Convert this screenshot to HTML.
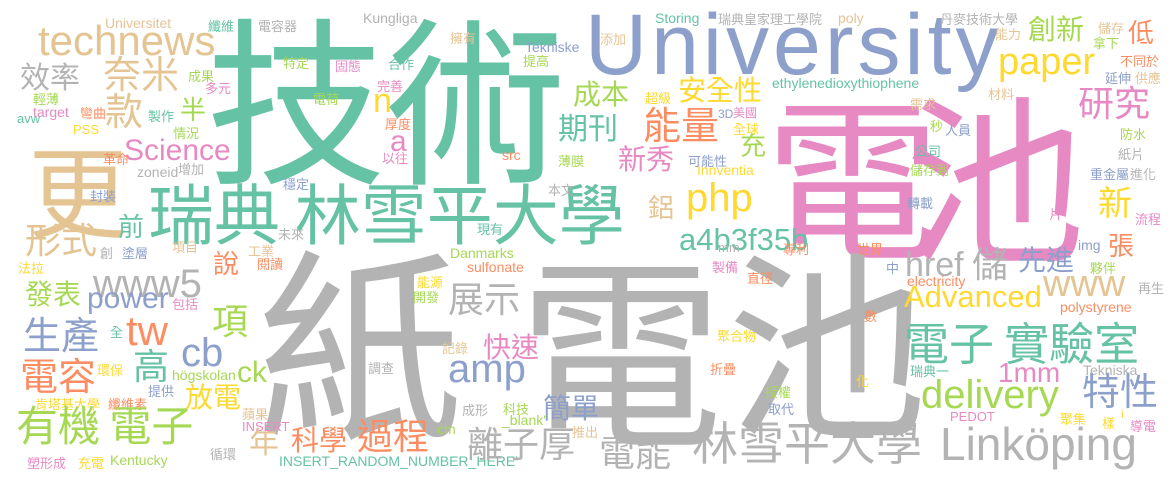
<!DOCTYPE html>
<html><head><meta charset="utf-8"><style>
html,body{margin:0;padding:0;background:#fff;}
#w{position:relative;width:1175px;height:482px;overflow:hidden;background:#fff;}
#w span{position:absolute;line-height:1;white-space:nowrap;font-family:"Liberation Sans",sans-serif;}
#w span.c{font-family:"Noto Sans CJK TC","Noto Sans CJK SC",sans-serif;}
.t{color:#66c2a5}.o{color:#fc8d62}.b{color:#8da0cb}.p{color:#e78ac3}.g{color:#a6d854}.y{color:#ffd92f}.n{color:#e5c494}.k{color:#b3b3b3}
</style></head><body><div id="w">
<span class="c t" style="left:206px;top:2px;font-size:180px">技術</span>
<span class="c p" style="left:765px;top:83px;font-size:175px">電</span>
<span class="c p" style="left:905px;top:80px;font-size:180px">池</span>
<span class="c k" style="left:257px;top:232px;font-size:205px">紙</span>
<span class="c k" style="left:518px;top:240px;font-size:205px">電</span>
<span class="c k" style="left:727px;top:234px;font-size:200px">池</span>
<span class="b" style="left:585px;top:2px;font-size:86px;letter-spacing:4px">University</span>
<span class="c n" style="left:28px;top:137px;font-size:100px">更</span>
<span class="c t" style="left:148px;top:178px;font-size:66px">瑞典 林雪平大學</span>
<span class="n" style="left:38px;top:20px;font-size:42px">technews</span>
<span class="n" style="left:105px;top:16px;font-size:14px">Universitet</span>
<span class="k" style="left:363px;top:11px;font-size:14px">Kungliga</span>
<span class="y" style="left:373px;top:84px;font-size:34px">n</span>
<span class="p" style="left:390px;top:127px;font-size:30px">a</span>
<span class="p" style="left:124px;top:136px;font-size:30px">Science</span>
<span class="p" style="left:33px;top:105px;font-size:14px">target</span>
<span class="t" style="left:17px;top:112px;font-size:13px">avw</span>
<span class="y" style="left:73px;top:123px;font-size:13px">PSS</span>
<span class="k" style="left:137px;top:165px;font-size:14px">zoneid</span>
<span class="o" style="left:502px;top:148px;font-size:14px">src</span>
<span class="k" style="left:93px;top:264px;font-size:40px">www5</span>
<span class="b" style="left:87px;top:284px;font-size:30px">power</span>
<span class="o" style="left:126px;top:310px;font-size:42px">tw</span>
<span class="b" style="left:181px;top:333px;font-size:40px">cb</span>
<span class="g" style="left:172px;top:368px;font-size:14px">högskolan</span>
<span class="g" style="left:237px;top:358px;font-size:30px">ck</span>
<span class="p" style="left:242px;top:420px;font-size:13px">INSERT</span>
<span class="g" style="left:110px;top:453px;font-size:14px">Kentucky</span>
<span class="t" style="left:279px;top:454px;font-size:14px">INSERT_RANDOM_NUMBER_HERE'</span>
<span class="g" style="left:437px;top:422px;font-size:14px">cm</span>
<span class="g" style="left:502px;top:413px;font-size:14px">_blank'</span>
<span class="g" style="left:450px;top:246px;font-size:14px">Danmarks</span>
<span class="o" style="left:467px;top:260px;font-size:14px">sulfonate</span>
<span class="b" style="left:448px;top:349px;font-size:40px">amp</span>
<span class="k" style="left:940px;top:421px;font-size:46px">Linköping</span>
<span class="t" style="left:655px;top:11px;font-size:14px">Storing</span>
<span class="n" style="left:838px;top:11px;font-size:14px">poly</span>
<span class="b" style="left:525px;top:40px;font-size:14px">Tekniske</span>
<span class="t" style="left:772px;top:76px;font-size:14px">ethylenedioxythiophene</span>
<span class="b" style="left:718px;top:108px;font-size:12px">3D</span>
<span class="y" style="left:686px;top:178px;font-size:40px">php</span>
<span class="y" style="left:697px;top:163px;font-size:14px">Innventia</span>
<span class="t" style="left:679px;top:224px;font-size:31px">a4b3f35b</span>
<span class="k" style="left:718px;top:241px;font-size:13px">mm</span>
<span class="k" style="left:905px;top:248px;font-size:34px">href</span>
<span class="o" style="left:907px;top:274px;font-size:14px">electricity</span>
<span class="b" style="left:1078px;top:238px;font-size:14px">img</span>
<span class="n" style="left:1043px;top:265px;font-size:38px">www</span>
<span class="y" style="left:904px;top:281px;font-size:31px">Advanced</span>
<span class="o" style="left:1060px;top:300px;font-size:14px">polystyrene</span>
<span class="p" style="left:998px;top:359px;font-size:28px">1mm</span>
<span class="k" style="left:1083px;top:363px;font-size:14px">Tekniska</span>
<span class="g" style="left:921px;top:375px;font-size:40px">delivery</span>
<span class="p" style="left:950px;top:410px;font-size:13px">PEDOT</span>
<span class="y" style="left:998px;top:43px;font-size:38px">paper</span>
<span class="y" style="left:1121px;top:408px;font-size:12px">i</span>

<span class="c t" style="left:208px;top:19px;font-size:13px">纖維</span>
<span class="c k" style="left:258px;top:19px;font-size:13px">電容器</span>
<span class="c k" style="left:20px;top:60px;font-size:30px">效率</span>
<span class="c n" style="left:103px;top:53px;font-size:38px">奈米</span>
<span class="c n" style="left:105px;top:90px;font-size:38px">款</span>
<span class="c g" style="left:283px;top:56px;font-size:13px">特定</span>
<span class="c g" style="left:188px;top:69px;font-size:13px">成果</span>
<span class="c p" style="left:205px;top:81px;font-size:13px">多元</span>
<span class="c p" style="left:335px;top:59px;font-size:13px">固態</span>
<span class="c p" style="left:377px;top:79px;font-size:13px">完善</span>
<span class="c g" style="left:33px;top:92px;font-size:13px">輕薄</span>
<span class="c g" style="left:313px;top:92px;font-size:13px">電荷</span>
<span class="c g" style="left:180px;top:96px;font-size:26px">半</span>
<span class="c o" style="left:80px;top:106px;font-size:13px">彎曲</span>
<span class="c t" style="left:148px;top:109px;font-size:13px">製作</span>
<span class="c g" style="left:173px;top:126px;font-size:13px">情況</span>
<span class="c o" style="left:385px;top:117px;font-size:13px">厚度</span>
<span class="c p" style="left:382px;top:151px;font-size:13px">以往</span>
<span class="c g" style="left:558px;top:154px;font-size:13px">薄膜</span>
<span class="c o" style="left:103px;top:152px;font-size:13px">革命</span>
<span class="c k" style="left:178px;top:162px;font-size:13px">增加</span>
<span class="c b" style="left:283px;top:177px;font-size:13px">穩定</span>
<span class="c b" style="left:90px;top:189px;font-size:13px">封裝</span>
<span class="c t" style="left:118px;top:213px;font-size:26px">前</span>
<span class="c n" style="left:25px;top:220px;font-size:36px">形式</span>
<span class="c k" style="left:278px;top:227px;font-size:13px">未來</span>
<span class="c n" style="left:172px;top:240px;font-size:13px">項目</span>
<span class="c k" style="left:100px;top:246px;font-size:13px">創</span>
<span class="c b" style="left:122px;top:246px;font-size:13px">塗層</span>
<span class="c n" style="left:248px;top:244px;font-size:13px">工業</span>
<span class="c o" style="left:257px;top:257px;font-size:13px">閱讀</span>
<span class="c y" style="left:18px;top:261px;font-size:13px">法拉</span>
<span class="c o" style="left:213px;top:250px;font-size:26px">說</span>
<span class="c g" style="left:25px;top:279px;font-size:28px">發表</span>
<span class="c p" style="left:172px;top:297px;font-size:13px">包括</span>
<span class="c g" style="left:212px;top:301px;font-size:36px">項</span>
<span class="c b" style="left:23px;top:314px;font-size:38px">生產</span>
<span class="c t" style="left:110px;top:325px;font-size:13px">全</span>
<span class="c t" style="left:133px;top:346px;font-size:36px">高</span>
<span class="c o" style="left:20px;top:355px;font-size:38px">電容</span>
<span class="c y" style="left:97px;top:363px;font-size:13px">環保</span>
<span class="c b" style="left:148px;top:384px;font-size:13px">提供</span>
<span class="c y" style="left:35px;top:397px;font-size:13px">肯塔基大學</span>
<span class="c o" style="left:108px;top:397px;font-size:13px">纖維素</span>
<span class="c y" style="left:185px;top:382px;font-size:28px">放電</span>
<span class="c g" style="left:16px;top:403px;font-size:42px">有機 電子</span>
<span class="c n" style="left:242px;top:407px;font-size:13px">蘋果</span>
<span class="c o" style="left:291px;top:425px;font-size:28px">科學</span>
<span class="c o" style="left:357px;top:416px;font-size:36px">過程</span>
<span class="c n" style="left:249px;top:425px;font-size:30px">年</span>
<span class="c k" style="left:210px;top:447px;font-size:13px">循環</span>
<span class="c p" style="left:27px;top:456px;font-size:13px">塑形成</span>
<span class="c y" style="left:78px;top:456px;font-size:13px">充電</span>
<span class="c k" style="left:467px;top:424px;font-size:36px">離子厚</span>
<span class="c k" style="left:599px;top:433px;font-size:36px">電能</span>
<span class="c k" style="left:692px;top:418px;font-size:46px">林雪平大學</span>
<span class="c k" style="left:448px;top:279px;font-size:36px">展示</span>
<span class="c p" style="left:483px;top:332px;font-size:28px">快速</span>
<span class="c b" style="left:543px;top:393px;font-size:28px">簡單</span>
<span class="c n" style="left:572px;top:425px;font-size:13px">推出</span>
<span class="c g" style="left:503px;top:402px;font-size:13px">科技</span>
<span class="c k" style="left:462px;top:403px;font-size:13px">成形</span>
<span class="c n" style="left:442px;top:341px;font-size:13px">記錄</span>
<span class="c k" style="left:368px;top:361px;font-size:13px">調查</span>
<span class="c y" style="left:417px;top:275px;font-size:13px">能源</span>
<span class="c g" style="left:413px;top:290px;font-size:13px">開發</span>
<span class="c t" style="left:477px;top:222px;font-size:13px">現有</span>
<span class="c k" style="left:548px;top:183px;font-size:13px">本文</span>
<span class="c n" style="left:450px;top:31px;font-size:13px">擁有</span>
<span class="c n" style="left:600px;top:32px;font-size:13px">添加</span>
<span class="c t" style="left:388px;top:57px;font-size:13px">合作</span>
<span class="c g" style="left:523px;top:54px;font-size:13px">提高</span>
<span class="c g" style="left:573px;top:79px;font-size:28px">成本</span>
<span class="c y" style="left:645px;top:91px;font-size:13px">超級</span>
<span class="c t" style="left:558px;top:111px;font-size:30px">期刊</span>
<span class="c o" style="left:643px;top:104px;font-size:38px">能量</span>
<span class="c y" style="left:678px;top:75px;font-size:28px">安全性</span>
<span class="c k" style="left:718px;top:12px;font-size:13px">瑞典皇家理工學院</span>
<span class="c k" style="left:940px;top:12px;font-size:13px">丹麥技術大學</span>
<span class="c p" style="left:733px;top:107px;font-size:12px">美國</span>
<span class="c y" style="left:733px;top:122px;font-size:13px">全球</span>
<span class="c g" style="left:740px;top:132px;font-size:26px">充</span>
<span class="c p" style="left:618px;top:144px;font-size:28px">新秀</span>
<span class="c b" style="left:688px;top:154px;font-size:13px">可能性</span>
<span class="c n" style="left:910px;top:97px;font-size:13px">需求</span>
<span class="c g" style="left:930px;top:119px;font-size:13px">秒</span>
<span class="c b" style="left:945px;top:123px;font-size:13px">人員</span>
<span class="c t" style="left:915px;top:144px;font-size:13px">公司</span>
<span class="c g" style="left:910px;top:163px;font-size:13px">儲存到</span>
<span class="c b" style="left:907px;top:196px;font-size:13px">轉載</span>
<span class="c n" style="left:648px;top:194px;font-size:26px">鋁</span>
<span class="c o" style="left:783px;top:242px;font-size:13px">專利</span>
<span class="c o" style="left:857px;top:242px;font-size:13px">世界</span>
<span class="c p" style="left:712px;top:260px;font-size:13px">製備</span>
<span class="c b" style="left:886px;top:261px;font-size:13px">中</span>
<span class="c o" style="left:747px;top:271px;font-size:13px">直徑</span>
<span class="c k" style="left:972px;top:244px;font-size:36px">儲</span>
<span class="c b" style="left:1018px;top:245px;font-size:28px">先進</span>
<span class="c o" style="left:1108px;top:232px;font-size:26px">張</span>
<span class="c g" style="left:1090px;top:261px;font-size:13px">夥伴</span>
<span class="c k" style="left:1138px;top:281px;font-size:13px">再生</span>
<span class="c t" style="left:904px;top:318px;font-size:45px">電子 實驗室</span>
<span class="c o" style="left:864px;top:309px;font-size:13px">數</span>
<span class="c y" style="left:717px;top:329px;font-size:13px">聚合物</span>
<span class="c o" style="left:710px;top:362px;font-size:13px">折疊</span>
<span class="c t" style="left:910px;top:364px;font-size:13px">瑞典一</span>
<span class="c y" style="left:856px;top:374px;font-size:13px">化</span>
<span class="c g" style="left:765px;top:385px;font-size:13px">授權</span>
<span class="c b" style="left:768px;top:402px;font-size:13px">取代</span>
<span class="c b" style="left:1082px;top:370px;font-size:38px">特性</span>
<span class="c y" style="left:1060px;top:412px;font-size:13px">聚集</span>
<span class="c y" style="left:1102px;top:416px;font-size:13px">樣</span>
<span class="c p" style="left:1130px;top:419px;font-size:13px">導電</span>
<span class="c g" style="left:1028px;top:14px;font-size:28px">創新</span>
<span class="c o" style="left:1128px;top:19px;font-size:26px">低</span>
<span class="c n" style="left:995px;top:27px;font-size:13px">能力</span>
<span class="c n" style="left:1098px;top:21px;font-size:13px">儲存</span>
<span class="c g" style="left:1093px;top:36px;font-size:13px">拿下</span>
<span class="c o" style="left:1120px;top:54px;font-size:13px">不同於</span>
<span class="c b" style="left:1105px;top:71px;font-size:13px">延伸</span>
<span class="c n" style="left:1135px;top:71px;font-size:13px">供應</span>
<span class="c n" style="left:988px;top:87px;font-size:13px">材料</span>
<span class="c p" style="left:1078px;top:83px;font-size:36px">研究</span>
<span class="c g" style="left:1120px;top:127px;font-size:13px">防水</span>
<span class="c k" style="left:1118px;top:147px;font-size:13px">紙片</span>
<span class="c b" style="left:1090px;top:167px;font-size:13px">重金屬</span>
<span class="c k" style="left:1130px;top:167px;font-size:13px">進化</span>
<span class="c y" style="left:1098px;top:184px;font-size:34px">新</span>
<span class="c p" style="left:1049px;top:207px;font-size:13px">片</span>
<span class="c p" style="left:1135px;top:212px;font-size:13px">流程</span>
</div></body></html>
